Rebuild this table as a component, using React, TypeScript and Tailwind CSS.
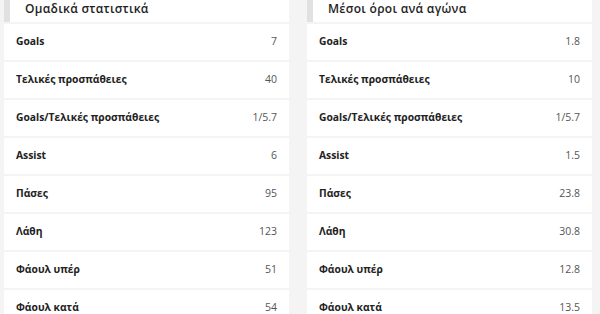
const team = [
  ['Goals', '7'],
  ['Τελικές προσπάθειες', '40'],
  ['Goals/Τελικές προσπάθειες', '1/5.7'],
  ['Assist', '6'],
  ['Πάσες', '95'],
  ['Λάθη', '123'],
  ['Φάουλ υπέρ', '51'],
  ['Φάουλ κατά', '54'],
];

const avg = [
  ['Goals', '1.8'],
  ['Τελικές προσπάθειες', '10'],
  ['Goals/Τελικές προσπάθειες', '1/5.7'],
  ['Assist', '1.5'],
  ['Πάσες', '23.8'],
  ['Λάθη', '30.8'],
  ['Φάουλ υπέρ', '12.8'],
  ['Φάουλ κατά', '13.5'],
];

const StatTable = ({ title, rows }: { title: string; rows: string[][] }) => (
  <div className="w-[285px] shrink-0 flex flex-col gap-[2px]">
    <div className="h-[22px] shrink-0 bg-white border-l-[6px] border-[#e1e1e1] flex items-end pb-[6px] pl-[15px]">
      <h3 className="text-[12px] leading-[15px] font-semibold text-[#1e1e1e] tracking-[0.3px]">{title}</h3>
    </div>
    {rows.map(([label, value]) => (
      <div key={label} className="h-[36px] shrink-0 bg-white flex items-center justify-between px-[12px]">
        <span className="text-[10.3px] font-bold text-[#222]">{label}</span>
        <span className="text-[10.5px] text-[#555]">{value}</span>
      </div>
    ))}
  </div>
);

export default function App() {
  return (
    <div
      className="w-[600px] h-[314px] overflow-hidden bg-[#f4f4f4] flex items-start gap-[18px] pl-[4px]"
      style={{ fontFamily: '"Open Sans", "Noto Sans", sans-serif' }}
    >
      <StatTable title="Ομαδικά στατιστικά" rows={team} />
      <StatTable title="Μέσοι όροι ανά αγώνα" rows={avg} />
    </div>
  );
}
